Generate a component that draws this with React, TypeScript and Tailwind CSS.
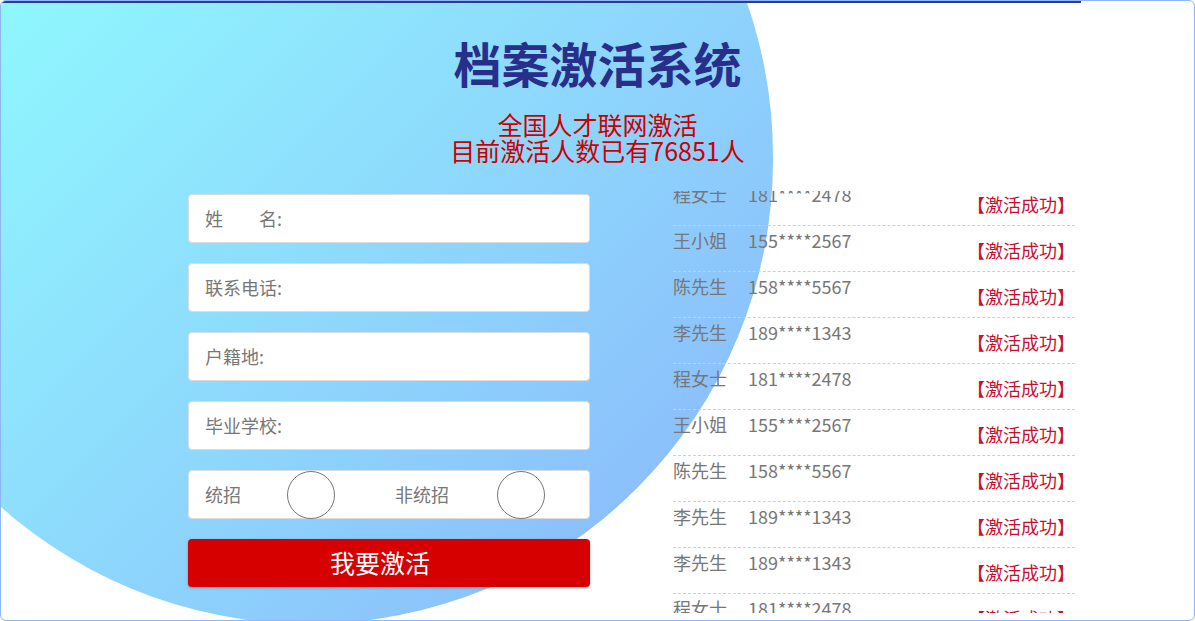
const records = [
  { name: "程女士", phone: "181****2478" },
  { name: "王小姐", phone: "155****2567" },
  { name: "陈先生", phone: "158****5567" },
  { name: "李先生", phone: "189****1343" },
  { name: "程女士", phone: "181****2478" },
  { name: "王小姐", phone: "155****2567" },
  { name: "陈先生", phone: "158****5567" },
  { name: "李先生", phone: "189****1343" },
  { name: "李先生", phone: "189****1343" },
  { name: "程女士", phone: "181****2478" },
];

const fields = ["姓\u3000\u3000名:", "联系电话:", "户籍地:", "毕业学校:"];

const Field = ({ label }: { label: string }) => (
  <div className="h-[49px] flex items-center pl-4 bg-white border border-[#dcdcdc] rounded-[4px] text-[18px] text-[#777]">
    {label}
  </div>
);

const Radio = () => (
  <span className="block w-[48px] h-[48px] rounded-full border border-[#777] bg-white shrink-0" />
);

export default function App() {
  return (
    <div
      className="relative w-[1195px] h-[621px] overflow-hidden bg-white border border-[#8db6f6] rounded-[6px]"
      style={{ fontFamily: '"Noto Sans CJK SC", "Noto Sans", sans-serif' }}
    >
      {/* Background circle */}
      <div className="absolute left-[-156px] top-[-309px] w-[928px] h-[932px] rounded-full bg-linear-to-br from-[#8ff7fd] from-25% to-[#8bbcfb] to-90%" />
      {/* top rule */}
      <div className="absolute top-0 left-0 h-[2px] w-[1080px] bg-[#2c3a9e]" />

      <div className="relative flex flex-col">
        {/* Heading */}
        <h1 className="mt-[33px] text-center text-[48px] leading-[56px] font-bold text-[#272f8a]">
          档案激活系统
        </h1>
        <div className="mt-[21px] text-center text-[25px] leading-[26px] text-[#cc0000]">
          <p>全国人才联网激活</p>
          <p>目前激活人数已有76851人</p>
        </div>

        <div className="mt-[28px] flex items-start pl-[187px] gap-[83px]">
          {/* Form */}
          <div className="mt-[3px] w-[402px] flex flex-col gap-5">
            {fields.map((f) => (
              <Field key={f} label={f} />
            ))}
            <div className="h-[49px] flex items-center pl-4 bg-white border border-[#dcdcdc] rounded-[4px] text-[18px] text-[#777]">
              <span>统招</span>
              <span className="ml-[46px]"><Radio /></span>
              <span className="ml-[60px]">非统招</span>
              <span className="ml-[48px]"><Radio /></span>
            </div>
            <button className="h-[48px] pr-[18px] bg-[#d70000] rounded-[4px] text-white text-[25px] shadow-[0_1px_3px_rgba(0,0,0,0.25)]">
              我要激活
            </button>
          </div>

          {/* Scrolling list */}
          <div className="w-[402px] h-[422px] overflow-hidden">
            <ul className="-mt-[11px]">
              {records.map((r, i) => (
                <li
                  key={i}
                  className="h-[46px] flex items-start border-b border-dashed border-[#cfcfcf] text-[18px]"
                >
                  <span className="w-[75px] leading-[28px] text-[#777]">{r.name}</span>
                  <span className="leading-[28px] text-[#777]">{r.phone}</span>
                  <span className="ml-auto mt-[10px] leading-[28px] text-[#c8102e]">
                    【激活成功】
                  </span>
                </li>
              ))}
            </ul>
          </div>
        </div>
      </div>
    </div>
  );
}
